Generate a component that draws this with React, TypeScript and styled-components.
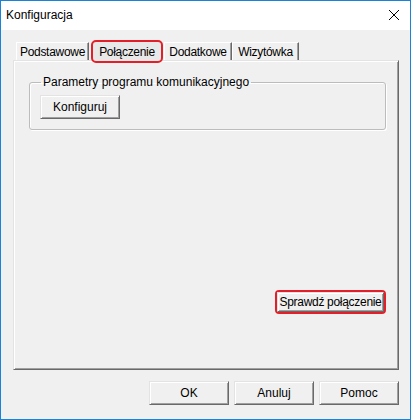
import styled, { createGlobalStyle } from "styled-components";

const GlobalStyle = createGlobalStyle`
  html, body {
    margin: 0;
    padding: 0;
    background: #ffffff;
  }
  body {
    font-family: "Liberation Sans", Arial, sans-serif;
  }
`;

const Window = styled.div`
  width: 411px;
  height: 420px;
  box-sizing: border-box;
  border: 1px solid #1883d7;
  background: #f0f0f0;
  display: flex;
  flex-direction: column;
  font-family: "Liberation Sans", Arial, sans-serif;
  font-size: 12px;
  color: #000;
`;

const TitleBar = styled.div`
  height: 29px;
  flex-shrink: 0;
  background: #ffffff;
  display: flex;
  align-items: center;
  justify-content: space-between;
  padding: 0 11px 0 5px;
`;

const Title = styled.span`
  font-size: 12px;
  line-height: 14px;
  margin-top: -2px;
`;

const CloseIcon = styled.svg`
  width: 10px;
  height: 10px;
  margin-top: -2px;
`;

const Body = styled.div`
  flex: 1;
  display: flex;
  flex-direction: column;
  padding: 12px 11px 14px 12px;
`;

const TabStrip = styled.div`
  display: flex;
  align-items: flex-end;
  height: 18px;
  padding-left: 3px;
`;

const Tab = styled.div<{ $width: number; $active?: boolean }>`
  box-sizing: border-box;
  width: ${(p) => p.$width}px;
  height: ${(p) => (p.$active ? 23 : 18)}px;
  display: flex;
  align-items: center;
  justify-content: center;
  white-space: nowrap;
  line-height: 14px;
  letter-spacing: -0.3px;
  position: relative;
  z-index: ${(p) => (p.$active ? 1 : 0)};
  margin: ${(p) => (p.$active ? "0 1px -3px 2px" : "0")};
  background: ${(p) => (p.$active ? "#e8e8e8" : "#f0f0f0")};
  border: ${(p) => (p.$active ? "2px solid #e3202a" : "1px solid")};
  border-bottom-width: ${(p) => (p.$active ? 2 : 0)}px;
  border-color: ${(p) =>
    p.$active ? "#e3202a" : "#ffffff #696969 transparent #ffffff"};
  border-radius: ${(p) => (p.$active ? "5px" : "0")};
  box-shadow: ${(p) => (p.$active ? "none" : "inset -1px 0 0 #a0a0a0")};
`;

const Panel = styled.div`
  flex: 1;
  display: flex;
  flex-direction: column;
  border: 1px solid;
  border-color: #e3e3e3 #696969 #696969 #e3e3e3;
  box-shadow: inset 1px 1px 0 #ffffff, inset -1px -1px 0 #a0a0a0;
  padding: 14px 12px 55px 15px;
`;

const Group = styled.fieldset`
  margin: 0;
  padding: 6px 10px 10px;
  border: 1px solid #bcbcbc;
  border-radius: 3px;
  box-shadow: inset 1px 1px 0 #ffffff, 1px 1px 0 #ffffff;
`;

const GroupLabel = styled.legend`
  padding: 0 2px;
  margin-left: 1px;
  line-height: 14px;
`;

const Button = styled.button<{ $width?: number }>`
  box-sizing: border-box;
  width: ${(p) => p.$width ?? 80}px;
  height: 24px;
  padding: 0;
  background: #f0f0f0;
  border: 1px solid;
  border-color: #e3e3e3 #696969 #696969 #e3e3e3;
  box-shadow: inset 1px 1px 0 #ffffff, inset -1px -1px 0 #a0a0a0;
  font-family: "Liberation Sans", Arial, sans-serif;
  font-size: 12px;
  color: #000;
  white-space: nowrap;
  overflow: visible;
`;

const Spacer = styled.div`
  flex: 1;
`;

const CheckRow = styled.div`
  display: flex;
  justify-content: flex-end;
`;

const Highlight = styled.div`
  display: flex;
  border: 2px solid #e3202a;
  border-radius: 4px;
`;

const CheckButton = styled(Button)`
  height: 20px;
  letter-spacing: -0.3px;
`;

const Footer = styled.div`
  display: flex;
  justify-content: flex-end;
  gap: 5px;
  margin-top: 11px;
`;

const tabs = [
  { label: "Podstawowe", width: 73 },
  { label: "Połączenie", width: 72, active: true },
  { label: "Dodatkowe", width: 68 },
  { label: "Wizytówka", width: 67 },
];

function App() {
  return (
    <>
      <GlobalStyle />
      <Window>
        <TitleBar>
          <Title>Konfiguracja</Title>
          <CloseIcon viewBox="0 0 10 10">
            <path d="M0 0L10 10M10 0L0 10" stroke="#000" strokeWidth="1" />
          </CloseIcon>
        </TitleBar>
        <Body>
          <TabStrip>
            {tabs.map((t) => (
              <Tab key={t.label} $width={t.width} $active={t.active}>
                {t.label}
              </Tab>
            ))}
          </TabStrip>
          <Panel>
            <Group>
              <GroupLabel>Parametry programu komunikacyjnego</GroupLabel>
              <Button $width={80}>Konfiguruj</Button>
            </Group>
            <Spacer />
            <CheckRow>
              <Highlight>
                <CheckButton $width={107}>Sprawdź połączenie</CheckButton>
              </Highlight>
            </CheckRow>
          </Panel>
          <Footer>
            <Button>OK</Button>
            <Button>Anuluj</Button>
            <Button>Pomoc</Button>
          </Footer>
        </Body>
      </Window>
    </>
  );
}

export default App;
